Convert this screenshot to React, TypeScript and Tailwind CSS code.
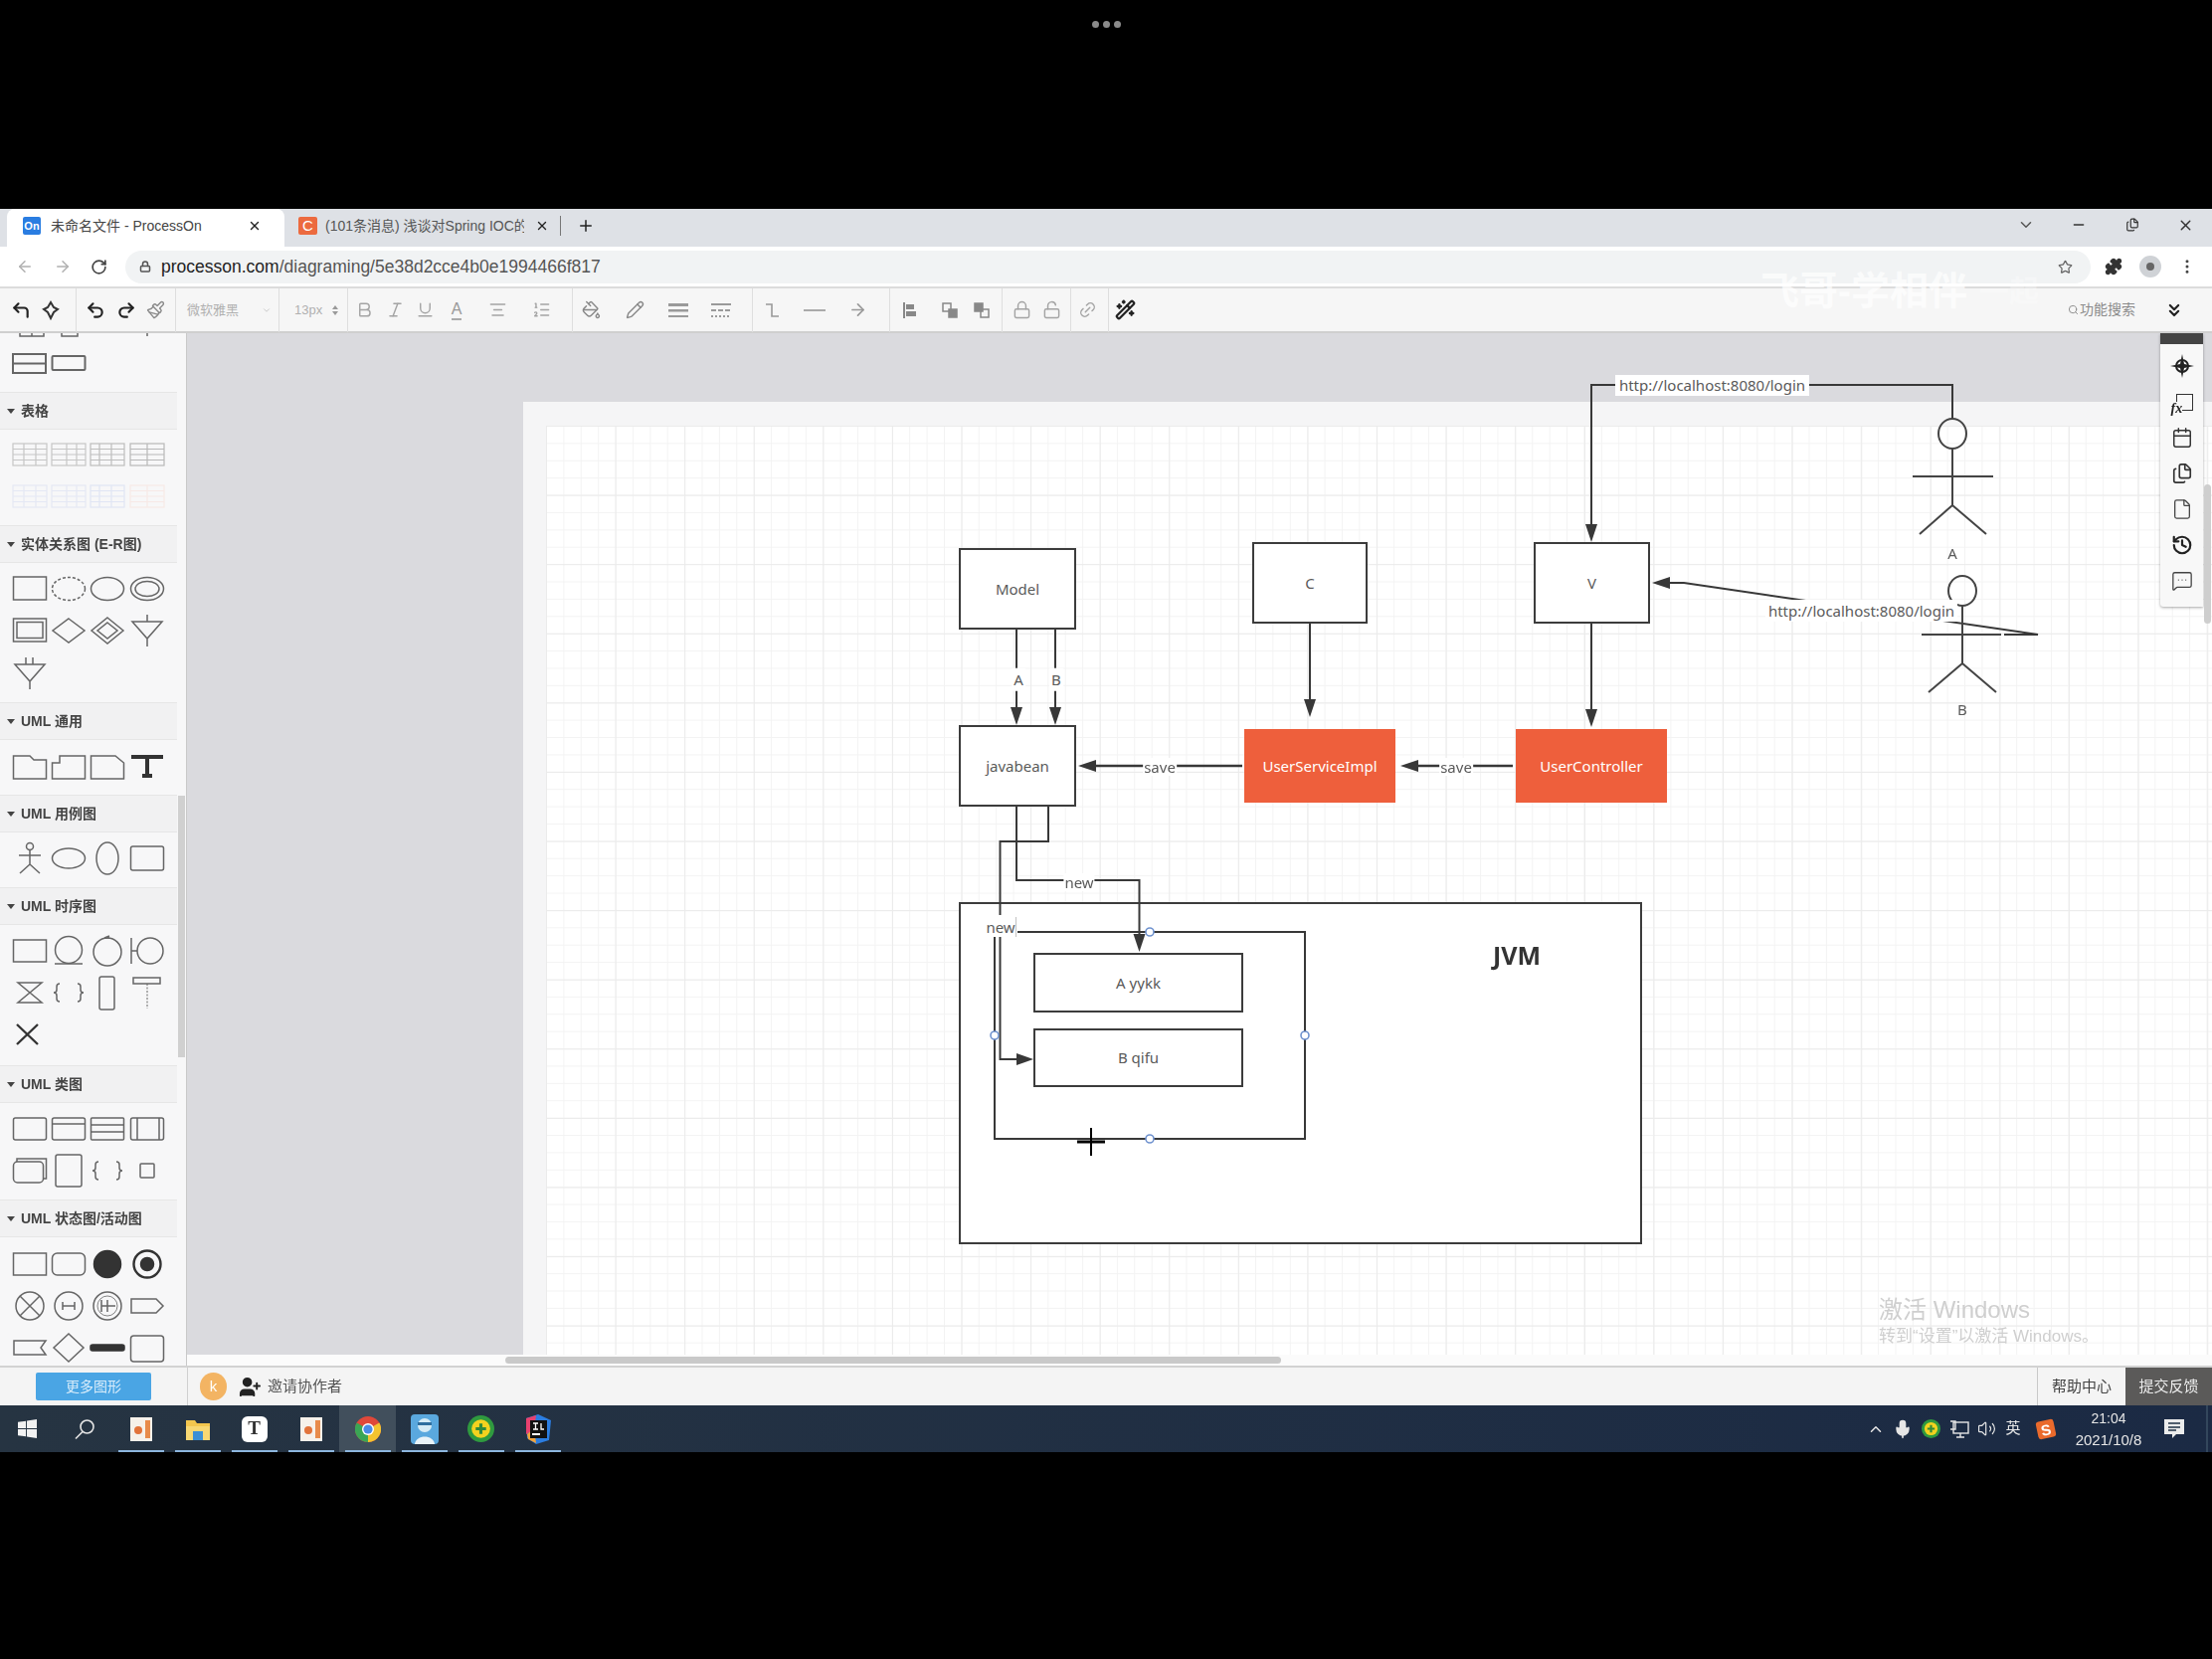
import React from 'react';
import {
  AlignCenter,
  ArrowLeft,
  ArrowRight,
  Bold,
  Calendar,
  ChevronDown,
  ChevronUp,
  ChevronsDown,
  CornerUpLeft,
  EllipsisVertical,
  File,
  Files,
  History,
  Italic,
  Link2,
  ListOrdered,
  Lock,
  LockOpen,
  MessageSquareMore,
  Mic,
  Minus,
  PaintBucket,
  Paintbrush,
  Pencil,
  Plus,
  Puzzle,
  Redo2,
  RotateCw,
  Search,
  Star,
  Underline,
  Undo2,
  UserPlus,
  Volume2,
  WandSparkles,
  X,
} from 'lucide-react';

const Sh: React.FC<{ children?: React.ReactNode }> = ({ children }) => (
  <svg width="36" height="36" viewBox="0 0 36 36" fill="none" stroke="#666" strokeWidth="1.5" className="mx-auto block">
    {children}
  </svg>
);

const TableIcon: React.FC<{ c: string; a?: number; b?: number }> = ({ c, a = 12, b = 24 }) => (
  <Sh>
    <g stroke={c} strokeWidth="1.2">
      <rect x="1" y="7" width="34" height="22" />
      <path d={`M1 12.5H35M1 18H35M1 23.5H35M${a} 7V29M${b} 7V29`} />
    </g>
  </Sh>
);

const Braces = () => (
  <Sh>
    <path d="M9 9q-3 0-3 3v3q0 3-3 3q3 0 3 3v3q0 3 3 3" />
    <path d="M27 9q3 0 3 3v3q0 3 3 3q-3 0-3 3v3q0 3-3 3" />
  </Sh>
);

type Row = React.ReactNode[];
type Section = { title: string; body: string; rows: Row[] };

const SECTIONS: Section[] = [
  {
    title: '表格',
    body: 'pt-[4px] pb-[8px]',
    rows: [
      [<TableIcon c="#c6c6c6" />, <TableIcon c="#c6c6c6" a={16} b={26} />, <TableIcon c="#bdbdbd" a={10} b={22} />, <TableIcon c="#b8b8b8" a={18} b={18} />],
      [<TableIcon c="#e4e8f4" />, <TableIcon c="#e4e8f4" a={16} b={26} />, <TableIcon c="#e0e5f4" a={10} b={22} />, <TableIcon c="#f7e9e6" a={18} b={18} />],
    ],
  },
  {
    title: '实体关系图 (E-R图)',
    body: 'pt-[5px] pb-[9px]',
    rows: [
      [
        <Sh><rect x="1.5" y="6" width="33" height="23" /></Sh>,
        <Sh><ellipse cx="18" cy="18" rx="16.5" ry="11.5" strokeDasharray="3 2" /></Sh>,
        <Sh><ellipse cx="18" cy="18" rx="16.5" ry="11.5" /></Sh>,
        <Sh><ellipse cx="18" cy="18" rx="16.5" ry="11.5" /><ellipse cx="18" cy="18" rx="12" ry="7.5" /></Sh>,
      ],
      [
        <Sh><rect x="1.5" y="6" width="33" height="23" /><rect x="5" y="9.5" width="26" height="16" /></Sh>,
        <Sh><path d="M18 6L34 18L18 30L2 18Z" /></Sh>,
        <Sh><path d="M18 5L34 18L18 31L2 18Z" /><path d="M18 10L28 18L18 26L8 18Z" /></Sh>,
        <Sh><path d="M3 9H33L18 26Z M18 2V9 M18 26V34" /></Sh>,
      ],
      [<Sh><path d="M3 10H33L18 27Z M14 3V10 M21 3V10 M18 27V35" /></Sh>, null, null, null],
    ],
  },
  {
    title: 'UML 通用',
    body: 'pt-[6px] pb-[7px]',
    rows: [
      [
        <Sh><path d="M1.5 11V30H34.5V11H22L18 7H1.5Z" /></Sh>,
        <Sh><path d="M9 7H34.5V30H1.5V14H9Z" /></Sh>,
        <Sh><path d="M1.5 7H26L34.5 14V30H1.5Z" /></Sh>,
        <Sh><path d="M2 8H34M18 8V27M13 27H23" stroke="#333" strokeWidth="4" /></Sh>,
      ],
    ],
  },
  {
    title: 'UML 用例图',
    body: 'pt-[5px] pb-[8px]',
    rows: [
      [
        <Sh><circle cx="18" cy="6" r="3.5" /><path d="M18 10V24M7 15H29M18 24L8 33M18 24L28 33" /></Sh>,
        <Sh><ellipse cx="18" cy="18" rx="16.5" ry="10" /></Sh>,
        <Sh><ellipse cx="18" cy="18" rx="11" ry="16" /></Sh>,
        <Sh><rect x="1.5" y="6" width="33" height="24" rx="2" /></Sh>,
      ],
    ],
  },
  {
    title: 'UML 时序图',
    body: 'pt-[5px] pb-[10px]',
    rows: [
      [
        <Sh><rect x="1.5" y="7" width="33" height="22" /></Sh>,
        <Sh><circle cx="18" cy="17" r="13.5" /><path d="M4 31H32" /></Sh>,
        <Sh><circle cx="18" cy="19" r="14" /><path d="M15 5L20 3M20 5L15 5" /></Sh>,
        <Sh><circle cx="21" cy="18" r="13" /><path d="M2 5V31M2 18H8" /></Sh>,
      ],
      [
        <Sh><path d="M6 8H30L6 28H30Z" /></Sh>,
        <Braces />,
        <Sh><rect x="10" y="2" width="15" height="33" rx="2" /></Sh>,
        <Sh><rect x="4" y="3" width="27" height="6" /><path d="M18 9V34" strokeDasharray="2 1.5" strokeWidth="1" /></Sh>,
      ],
      [<Sh><path d="M5 8L26 28M26 8L5 28" stroke="#333" strokeWidth="2.4" /></Sh>, null, null, null],
    ],
  },
  {
    title: 'UML 类图',
    body: 'pt-[5px] pb-[8px]',
    rows: [
      [
        <Sh><rect x="1.5" y="7" width="33" height="22" rx="2" /></Sh>,
        <Sh><rect x="1.5" y="7" width="33" height="22" rx="2" /><path d="M1.5 13H34.5" /></Sh>,
        <Sh><rect x="1.5" y="7" width="33" height="22" rx="1" /><path d="M1.5 14H34.5M1.5 21H34.5" /></Sh>,
        <Sh><rect x="1.5" y="7" width="33" height="22" rx="2" /><path d="M8 7V29M30 7V29" /></Sh>,
      ],
      [
        <Sh><rect x="1.5" y="9" width="30" height="21" rx="4" /><path d="M5 9V6H34.5V26H31.5" /></Sh>,
        <Sh><rect x="5" y="2" width="26" height="32" rx="2" /></Sh>,
        <Braces />,
        <Sh><rect x="11" y="11" width="14" height="14" rx="1" /></Sh>,
      ],
    ],
  },
  {
    title: 'UML 状态图/活动图',
    body: 'pt-[6px]',
    rows: [
      [
        <Sh><rect x="1.5" y="7" width="33" height="22" /></Sh>,
        <Sh><rect x="1.5" y="7" width="33" height="22" rx="5" /></Sh>,
        <Sh><circle cx="18" cy="18" r="13.5" fill="#333" stroke="#333" /></Sh>,
        <Sh><circle cx="18" cy="18" r="13.5" stroke="#333" strokeWidth="2.4" /><circle cx="18" cy="18" r="6.5" fill="#333" stroke="#333" /></Sh>,
      ],
      [
        <Sh><circle cx="18" cy="18" r="14" /><path d="M8 8L28 28M28 8L8 28" /></Sh>,
        <Sh><circle cx="18" cy="18" r="14" /><path d="M12 14V22M24 14V22M12 18H24" /></Sh>,
        <Sh><circle cx="18" cy="18" r="14" /><circle cx="18" cy="18" r="10" strokeWidth="0.8" /><path d="M12 12V24M18 12V24M12 18H26" /></Sh>,
        <Sh><path d="M2 11H27L34 18L27 25H2Z" /></Sh>,
      ],
      [
        <Sh><path d="M2 11H34L29 18L34 25H2Z" /></Sh>,
        <Sh><path d="M18 4L33 18L18 32L3 18Z" /></Sh>,
        <Sh><rect x="1" y="15" width="34" height="6" rx="2" fill="#333" stroke="#333" /></Sh>,
        <Sh><rect x="1.5" y="6" width="33" height="26" rx="3" /></Sh>,
      ],
    ],
  },
];

const ShapeGrid: React.FC<{ rows: Row[] }> = ({ rows }) => (
  <div className="pl-[10px]">
    {rows.map((row, i) => (
      <div key={i} className="grid h-[42px] grid-cols-[repeat(4,39.3px)] items-center">
        {row.map((cell, j) => (
          <div key={j}>{cell}</div>
        ))}
      </div>
    ))}
  </div>
);

const Sidebar = () => (
  <aside className="flex h-full w-[188px] shrink-0 overflow-hidden border-r border-[#c9c9c9] bg-[#f7f7f8]">
    <div className="w-[178px] shrink-0">
      <div className="-mt-[32px] pb-[7px]">
        <ShapeGrid
          rows={[
            [
              <Sh><rect x="8" y="10" width="24" height="22" /><path d="M20 10V32" /></Sh>,
              <Sh><rect x="11" y="10" width="16" height="22" /></Sh>,
              null,
              <Sh><path d="M18 20V32" /></Sh>,
            ],
            [
              <Sh><g strokeWidth="2"><rect x="1" y="8" width="33" height="19" /><path d="M1 17.5H34" /></g></Sh>,
              <Sh><rect x="1.5" y="10" width="33" height="14" rx="1" strokeWidth="2" /></Sh>,
              null,
              null,
            ],
          ]}
        />
      </div>
      {SECTIONS.map((s) => (
        <section key={s.title}>
          <header className="flex h-[38px] items-center gap-[6px] border-y border-[#e6e6e6] bg-[#f1f1f2] pl-[7px] text-[14px] font-bold text-[#444]">
            <span className="h-0 w-0 border-x-[4px] border-t-[5px] border-x-transparent border-t-[#444]" />
            {s.title}
          </header>
          <div className={s.body}>
            <ShapeGrid rows={s.rows} />
          </div>
        </section>
      ))}
    </div>
    <div className="flex-1 pl-[1px] pt-[465px]">
      <div className="h-[263px] w-[7px] bg-[#d0d0d0]" />
    </div>
  </aside>
);

const Sep: React.FC<{ className: string }> = ({ className }) => <div className={`h-[44px] w-px bg-[#dedede] ${className}`} />;

const Tool: React.FC<{ className?: string; children: React.ReactNode }> = ({ className = '', children }) => (
  <div className={`flex h-[24px] w-[24px] shrink-0 items-center justify-center ${className}`}>{children}</div>
);

const Toolbar = () => {
  const dark = { size: 20, color: '#222', strokeWidth: 2.6 };
  const off = { size: 19, color: '#a4a4a4', strokeWidth: 1.8 };
  return (
    <div className="flex h-[45px] shrink-0 items-center border-b-2 border-[#cfcfcf] bg-[#f6f6f6] pl-[9px] pr-[28px]">
      <Tool><CornerUpLeft {...dark} /></Tool>
      <Tool className="ml-[6px]">
        <svg width="20" height="20" viewBox="0 0 20 20" fill="none" stroke="#333" strokeWidth="2">
          <path d="M10 2L13 7L17 9L13 12L10 18L7 12L3 9L7 7Z" />
        </svg>
      </Tool>
      <Sep className="ml-[13px]" />
      <Tool className="ml-[7px]"><Undo2 {...dark} /></Tool>
      <Tool className="ml-[7px]"><Redo2 {...dark} /></Tool>
      <Tool className="ml-[5px]"><Paintbrush {...off} color="#8a8a8a" /></Tool>
      <Sep className="ml-[8px]" />
      <span className="ml-[11px] w-[55px] shrink-0 text-[13px] text-[#b0b0b0]">微软雅黑</span>
      <ChevronDown className="ml-[20px] shrink-0" size={10} color="#c0c0c0" />
      <Sep className="ml-[7px]" />
      <span className="ml-[15px] w-[29px] shrink-0 text-[13px] text-[#b0b0b0]">13px</span>
      <div className="ml-[7px] flex w-[10px] shrink-0 flex-col items-center gap-[2px]">
        <span className="h-0 w-0 border-x-[3px] border-b-[4px] border-x-transparent border-b-[#999]" />
        <span className="h-0 w-0 border-x-[3px] border-t-[4px] border-x-transparent border-t-[#999]" />
      </div>
      <Sep className="ml-[7px]" />
      <Tool className="ml-[4px]"><Bold {...off} /></Tool>
      <Tool className="ml-[7px]"><Italic {...off} /></Tool>
      <Tool className="ml-[6px]"><Underline {...off} /></Tool>
      <Tool className="ml-[8px]"><span className="border-b-2 border-[#aaa] text-[16px] leading-[18px] text-[#999]">A</span></Tool>
      <Tool className="ml-[17px]"><AlignCenter {...off} /></Tool>
      <Tool className="ml-[20px]"><ListOrdered {...off} /></Tool>
      <Sep className="ml-[19px]" />
      <Tool className="ml-[6px]"><PaintBucket {...off} color="#888" /></Tool>
      <Tool className="ml-[20px]"><Pencil {...off} color="#888" /></Tool>
      <Tool className="ml-[20px]">
        <svg width="20" height="16" viewBox="0 0 20 16" fill="#9a9a9a"><rect y="1" width="20" height="3" /><rect y="7" width="20" height="2.5" /><rect y="13" width="20" height="2" /></svg>
      </Tool>
      <Tool className="ml-[19px]">
        <svg width="20" height="16" viewBox="0 0 20 16" fill="none" stroke="#9a9a9a" strokeWidth="2"><path d="M0 2H20" /><path d="M0 8H20" strokeDasharray="5 2" /><path d="M0 14H20" strokeDasharray="2 2" /></svg>
      </Tool>
      <Sep className="ml-[19px]" />
      <Tool className="ml-[7px]">
        <svg width="18" height="18" viewBox="0 0 18 18" fill="none" stroke="#999" strokeWidth="1.6"><path d="M3 3H9V15H16" /></svg>
      </Tool>
      <Tool className="ml-[19px]"><div className="h-[2px] w-[22px] bg-[#aaa]" /></Tool>
      <Tool className="ml-[19px]"><ArrowRight {...off} color="#999" strokeWidth={2.2} /></Tool>
      <Sep className="ml-[20px]" />
      <Tool className="ml-[7px]">
        <svg width="18" height="18" viewBox="0 0 18 18" fill="#888"><rect x="3" y="1" width="2" height="16" /><rect x="6" y="3" width="8" height="5" /><rect x="6" y="10" width="10" height="5" /></svg>
      </Tool>
      <Tool className="ml-[17px]">
        <svg width="18" height="18" viewBox="0 0 18 18" fill="none" stroke="#888" strokeWidth="1.5"><rect x="2" y="2" width="8" height="8" /><rect x="8" y="8" width="8" height="8" fill="#888" /></svg>
      </Tool>
      <Tool className="ml-[8px]">
        <svg width="18" height="18" viewBox="0 0 18 18" fill="none" stroke="#888" strokeWidth="1.5"><rect x="2" y="2" width="8" height="8" fill="#888" /><rect x="8" y="8" width="8" height="8" /></svg>
      </Tool>
      <Sep className="ml-[8px]" />
      <Tool className="ml-[7px]"><Lock {...off} /></Tool>
      <Tool className="ml-[6px]"><LockOpen {...off} /></Tool>
      <Sep className="ml-[7px]" />
      <Tool className="ml-[4px]"><Link2 {...off} className="-rotate-45" /></Tool>
      <Sep className="ml-[9px]" />
      <Tool className="ml-[4px]"><WandSparkles {...dark} size={21} /></Tool>
      <div className="ml-auto flex items-center gap-[1px] text-[14px] text-[#8a8a8a]">
        <Search size={11} color="#888" />
        功能搜索
      </div>
      <ChevronsDown className="ml-[29px]" size={20} color="#222" strokeWidth={2.6} />
    </div>
  );
};

const Canvas = () => (
  <div className="flex min-w-0 flex-1 flex-col">
    <div className="relative flex-1 overflow-hidden bg-[#dadade]">
      {/* page with its grid */}
      <div className="absolute bottom-0 left-[338px] right-0 top-[69px] bg-[#f5f5f6] pl-[23px] pt-[24px]">
        <div className="h-full bg-white bg-[linear-gradient(to_right,#ebebeb_1px,transparent_1px),linear-gradient(to_bottom,#ebebeb_1px,transparent_1px),linear-gradient(to_right,#f3f3f3_1px,transparent_1px),linear-gradient(to_bottom,#f3f3f3_1px,transparent_1px)] bg-[size:69.6px_69.6px,69.6px_69.6px,17.4px_17.4px,17.4px_17.4px]" />
      </div>

      {/* JVM frame sits under the connectors */}
      <div className="absolute left-[776px] top-[572px] h-[344px] w-[687px] border-2 border-[#3c3c3c] bg-white" />
      <span className="absolute left-[1337px] top-[626px] -translate-x-1/2 -translate-y-1/2 text-[25px] font-bold text-[#333] [font-family:'Noto_Sans',sans-serif]">JVM</span>

      {/* connectors */}
      <svg className="absolute inset-0 h-full w-full" viewBox="188 335 2036 1027" fill="none" stroke="#383838" strokeWidth="2">
        <path d="M1963 422V387H1600V530" />
        <path d="M1600 627V716M1317 627V706M1022 633V716M1061 633V716" />
        <path d="M1249 770H1098M1521 770H1422" strokeWidth="2.4" />
        <path d="M1022 811V885H1145.5V942" />
        <path d="M1054 811V846H1005.5V920M1005.5 942V1065H1026" />
        <path d="M1023 937H1312V1145H1000V942" />
        <path d="M2015 638H2049L1693 586H1675" />
        <g fill="#383838" stroke="none">
          <path d="M1600 545L1594 527H1606Z" />
          <path d="M1600 731L1594 713H1606Z" />
          <path d="M1317 721L1311 703H1323Z" />
          <path d="M1022 729L1016 711H1028Z" />
          <path d="M1061 729L1055 711H1067Z" />
          <path d="M1145.5 957L1139.5 939H1151.5Z" />
          <path d="M1084 770L1102 764V776Z" />
          <path d="M1408 770L1426 764V776Z" />
          <path d="M1039 1065L1022 1059V1071Z" />
          <path d="M1661 586L1679 580V592Z" />
        </g>
        <g stroke="#444">
          <ellipse cx="1963" cy="436" rx="14" ry="15" />
          <path d="M1963 451V508M1923 479H2004M1963 508L1930 537M1963 508L1997 537" />
          <ellipse cx="1973" cy="594" rx="14" ry="15" />
          <path d="M1973 609V667M1932 638H2012M1973 667L1939 696M1973 667L2007 696" />
        </g>
        <g fill="#fff" stroke="#6f92cf" strokeWidth="1.6">
          <circle cx="1156" cy="937" r="4" />
          <circle cx="1000" cy="1041" r="4" />
          <circle cx="1312" cy="1041" r="4" />
          <circle cx="1156" cy="1145" r="4" />
        </g>
        <path d="M1097 1134V1162" stroke="#000" strokeWidth="2" />
        <path d="M1083 1148H1111" stroke="#000" strokeWidth="3" />
      </svg>

      {/* nodes */}
      <div className="text-[15px] text-[#5a5a5a] [font-family:'Noto_Sans',sans-serif]">
        <div className="absolute left-[776px] top-[216px] flex h-[82px] w-[118px] items-center justify-center border-2 border-[#3c3c3c] bg-white">Model</div>
        <div className="absolute left-[1071px] top-[210px] flex h-[82px] w-[116px] items-center justify-center border-2 border-[#3c3c3c] bg-white">C</div>
        <div className="absolute left-[1354px] top-[210px] flex h-[82px] w-[117px] items-center justify-center border-2 border-[#3c3c3c] bg-white">V</div>
        <div className="absolute left-[776px] top-[394px] flex h-[82px] w-[118px] items-center justify-center border-2 border-[#3c3c3c] bg-white">javabean</div>
        <div className="absolute left-[1063px] top-[398px] flex h-[74px] w-[152px] items-center justify-center bg-[#ee5f3c] text-white">UserServiceImpl</div>
        <div className="absolute left-[1336px] top-[398px] flex h-[74px] w-[152px] items-center justify-center bg-[#ee5f3c] text-white">UserController</div>
        <div className="absolute left-[851px] top-[623px] flex h-[60px] w-[211px] items-center justify-center border-2 border-[#3c3c3c] bg-white">A yykk</div>
        <div className="absolute left-[851px] top-[699px] flex h-[59px] w-[211px] items-center justify-center border-2 border-[#3c3c3c] bg-white">B qifu</div>

        <span className="absolute left-[836px] top-[348px] -translate-x-1/2 -translate-y-1/2 bg-white px-[2px]">A</span>
        <span className="absolute left-[874px] top-[348px] -translate-x-1/2 -translate-y-1/2 bg-white px-[2px]">B</span>
        <span className="absolute left-[978px] top-[436px] -translate-x-1/2 -translate-y-1/2 bg-white px-[1px] leading-[18px]">save</span>
        <span className="absolute left-[1276px] top-[436px] -translate-x-1/2 -translate-y-1/2 bg-white px-[1px] leading-[18px]">save</span>
        <span className="absolute left-[897px] top-[552px] -translate-x-1/2 -translate-y-1/2 bg-white px-[1px] leading-[18px]">new</span>
        <span className="absolute left-[818px] top-[597px] -translate-x-1/2 -translate-y-1/2 bg-white px-[1px] leading-[20px]">new</span>
        <span className="absolute left-[1436px] top-[42px] flex h-[21px] w-[195px] items-center justify-center whitespace-nowrap bg-white">http://localhost:8080/login</span>
        <span className="absolute left-[1587px] top-[268px] flex h-[22px] w-[193px] items-center justify-center whitespace-nowrap bg-white">http://localhost:8080/login</span>
        <span className="absolute left-[1775px] top-[221px] -translate-x-1/2 -translate-y-1/2">A</span>
        <span className="absolute left-[1785px] top-[378px] -translate-x-1/2 -translate-y-1/2">B</span>
      </div>

      {/* Windows activation notice */}
      <div className="absolute left-[1701px] top-[968px] text-[#cfcfcf]">
        <p className="text-[24px] leading-[28px]">激活 Windows</p>
        <p className="text-[17px] leading-[26px]">转到“设置”以激活 Windows。</p>
      </div>

      {/* right floating panel */}
      <div className="absolute left-[1984px] top-0 h-[275px] w-[43px] rounded-bl-[3px] bg-[#f8f8f8] shadow-[0_1px_3px_rgba(0,0,0,0.35)]">
        <div className="h-[11px] bg-[#444]" />
        <div className="flex flex-col items-center pt-[4px]">
          <div className="flex h-[36px] items-center">
            <svg width="24" height="24" viewBox="0 0 24 24" fill="#222"><path d="M12 0L14 10L24 12L14 14L12 24L10 14L0 12L10 10Z" /><circle cx="12" cy="12" r="6" fill="none" stroke="#222" strokeWidth="2" /></svg>
          </div>
          <div className="relative flex h-[36px] items-center">
            <div className="ml-[5px] h-[17px] w-[17px] border-[1.5px] border-[#333]" />
            <span className="absolute bottom-[4px] left-0 bg-[#f8f8f8] text-[14px] font-bold italic leading-[14px] text-[#222] [font-family:'Liberation_Serif',serif]">fx</span>
          </div>
          <div className="flex h-[36px] items-center"><Calendar size={22} color="#333" strokeWidth={1.6} /></div>
          <div className="flex h-[36px] items-center"><Files size={22} color="#333" strokeWidth={1.8} /></div>
          <div className="flex h-[36px] items-center"><File size={22} color="#444" strokeWidth={1.4} /></div>
          <div className="flex h-[36px] items-center"><History size={22} color="#222" strokeWidth={2.4} /></div>
          <div className="flex h-[36px] items-center"><MessageSquareMore size={22} color="#444" strokeWidth={1.4} /></div>
        </div>
      </div>
      <div className="absolute left-[2028px] top-[152px] h-[140px] w-[7px] rounded-full bg-[#cecece]" />
    </div>
    {/* horizontal scroll strip */}
    <div className="flex h-[11px] shrink-0 items-center bg-[#fbfbfb] pl-[320px]">
      <div className="h-[7px] w-[780px] rounded-full bg-[#c9c9c9]" />
    </div>
  </div>
);

const PptIcon = () => (
  <svg width="24" height="28" viewBox="0 0 24 28">
    <rect x="1" y="2" width="22" height="24" fill="#f6f1ea" />
    <rect x="16" y="5" width="5" height="18" fill="#e88b4a" />
    <circle cx="9" cy="15" r="4" fill="#e2733a" />
  </svg>
);

const TaskSlot: React.FC<{ active?: boolean; running?: boolean; children: React.ReactNode }> = ({ active, running, children }) => (
  <div className={`relative flex h-full w-[57px] shrink-0 items-center justify-center ${active ? 'bg-[#414f5c]' : ''}`}>
    {children}
    {running && <div className="absolute bottom-0 left-1/2 h-[2px] w-[46px] -translate-x-1/2 bg-[#8db6de]" />}
  </div>
);

const Green360: React.FC<{ size: number }> = ({ size }) => (
  <svg width={size} height={size} viewBox="0 0 26 26">
    <circle cx="13" cy="13" r="13" fill="#2f9a3f" />
    <circle cx="13" cy="13" r="9" fill="#f3d21f" />
    <path d="M13 8V18M8 13H18" stroke="#2f8a3a" strokeWidth="3" />
  </svg>
);

const Taskbar = () => (
  <div className="flex h-[47px] shrink-0 items-center bg-gradient-to-r from-[#263442] to-[#1b2a44] text-[#e6e6e6]">
    <div className="flex h-full -ml-px">
      <TaskSlot>
        <svg width="19" height="19" viewBox="0 0 20 20" fill="#f2f2f2"><path d="M0 3L8.5 1.8V9.5H0ZM9.5 1.6L20 0V9.5H9.5ZM0 10.5H8.5V18.2L0 17ZM9.5 10.5H20V20L9.5 18.4Z" /></svg>
      </TaskSlot>
      <TaskSlot>
        <svg width="22" height="22" viewBox="0 0 22 22" fill="none" stroke="#e6e6e6" strokeWidth="1.6"><circle cx="13.5" cy="8.5" r="6.5" /><path d="M9 13.5L2 20.5" /></svg>
      </TaskSlot>
      <TaskSlot running><PptIcon /></TaskSlot>
      <TaskSlot running>
        <svg width="26" height="26" viewBox="0 0 26 26"><path d="M1 4H10L12 7H25V24H1Z" fill="#f3c64e" /><rect x="1" y="10" width="24" height="14" fill="#f8d873" /><rect x="8" y="15" width="10" height="9" fill="#3c8fd6" /></svg>
      </TaskSlot>
      <TaskSlot running>
        <div className="flex h-[26px] w-[26px] items-center justify-center rounded-[6px] bg-white text-[19px] font-bold text-[#333] [font-family:'Liberation_Serif',serif]">T</div>
      </TaskSlot>
      <TaskSlot running><PptIcon /></TaskSlot>
      <TaskSlot active running>
        <svg width="26" height="26" viewBox="0 0 26 26">
          <circle cx="13" cy="13" r="13" fill="#e0483a" />
          <path d="M13 13L1.7 6.5A13 13 0 0 0 13 26Z" fill="#3aa655" />
          <path d="M13 13L13 26A13 13 0 0 0 24.3 6.5Z" fill="#f4c430" />
          <circle cx="13" cy="13" r="6" fill="#fff" />
          <circle cx="13" cy="13" r="4.6" fill="#4a8be8" />
        </svg>
      </TaskSlot>
      <TaskSlot running>
        <svg width="28" height="30" viewBox="0 0 28 30"><rect width="28" height="30" rx="4" fill="#5aa8de" /><circle cx="14" cy="11" r="7" fill="#d6ecf6" /><path d="M4 30C5 20 23 20 24 30Z" fill="#e9f3f8" /><rect x="7" y="8" width="14" height="3" fill="#2f6f9f" /></svg>
      </TaskSlot>
      <TaskSlot running><Green360 size={27} /></TaskSlot>
      <TaskSlot running>
        <svg width="28" height="30" viewBox="0 0 28 30">
          <path d="M2 4L14 0L27 6L25 26L12 30L3 24Z" fill="#2b7de0" />
          <path d="M2 4L12 1L10 16L2 20Z" fill="#e8416f" />
          <path d="M3 20L10 14L12 29L4 25Z" fill="#f2a33a" />
          <rect x="6" y="6" width="17" height="18" fill="#111" />
          <rect x="8" y="19" width="8" height="2" fill="#fff" />
          <path d="M9 9H14M11.5 9V15M9 15H14M17 9V15H20" stroke="#fff" strokeWidth="1.3" fill="none" />
        </svg>
      </TaskSlot>
    </div>
    <div className="ml-auto flex h-full items-center">
      <div className="flex w-[26px] justify-center"><ChevronUp size={18} color="#e6e6e6" /></div>
      <div className="flex w-[28px] justify-center"><Mic size={20} color="#e6e6e6" fill="#e6e6e6" /></div>
      <div className="flex w-[28px] justify-center"><Green360 size={19} /></div>
      <div className="flex w-[29px] justify-center">
        <svg width="20" height="18" viewBox="0 0 20 18" fill="none" stroke="#e6e6e6" strokeWidth="1.4"><rect x="4" y="2" width="15" height="11" /><path d="M1 1H6V9H1M11 13V17M7 17H15" /></svg>
      </div>
      <div className="flex w-[26px] justify-center"><Volume2 size={19} color="#e6e6e6" strokeWidth={1.5} /></div>
      <div className="flex w-[28px] justify-center text-[15px]">英</div>
      <div className="flex w-[38px] justify-center">
        <div className="flex h-[18px] w-[18px] -rotate-12 items-center justify-center rounded-[3px] bg-[#ea6a2c] text-[15px] font-bold leading-none text-white">S</div>
      </div>
      <div className="flex w-[88px] flex-col items-center leading-[22px]">
        <span className="text-[14px]">21:04</span>
        <span className="text-[15px]">2021/10/8</span>
      </div>
      <div className="flex w-[44px] justify-center">
        <svg width="20" height="19" viewBox="0 0 20 19" fill="#ececec"><path d="M0 0H20V15H12L8 19V15H0Z" /><path d="M4 4H16M4 8H16M4 11H12" stroke="#1f3044" strokeWidth="1.3" /></svg>
      </div>
      <div className="h-full w-[16px] pl-[10px]"><div className="h-full w-[2px] bg-[#33475c]" /></div>
    </div>
  </div>
);

const Window = () => (
  <div className="relative flex h-[1250px] shrink-0 flex-col overflow-hidden blur-[0.5px]">
    {/* tab strip */}
    <div className="flex h-[38px] shrink-0 items-start bg-[#dee1e6] pl-[7px] text-[14px] text-[#555]">
      <div className="flex h-[38px] w-[279px] shrink-0 items-center rounded-t-[8px] bg-white pb-[4px] pl-[16px]">
        <div className="flex h-[18px] w-[18px] items-center justify-center rounded-[2px] bg-[#2a7de1] text-[11px] font-bold text-white">On</div>
        <span className="ml-[10px] w-[198px] text-[#444]">未命名文件 - ProcessOn</span>
        <X size={14} color="#222" strokeWidth={2.4} />
      </div>
      <div className="flex h-[38px] items-center pb-[4px] pl-[14px]">
        <div className="flex h-[18px] w-[19px] items-center justify-center rounded-[2px] bg-[#ec6a3f] text-[15px] text-white">C</div>
        <span className="ml-[8px] w-[200px] overflow-hidden whitespace-nowrap">(101条消息) 浅谈对Spring IOC的</span>
        <X className="ml-[11px]" size={14} color="#222" strokeWidth={2.4} />
        <div className="ml-[11px] h-[20px] w-px bg-[#777]" />
        <Plus className="ml-[16px]" size={18} color="#222" strokeWidth={2} />
      </div>
      <div className="ml-auto flex h-[30px] items-center pr-[18px] pt-[2px]">
        <ChevronDown size={18} color="#555" />
        <Minus className="ml-[36px]" size={16} color="#333" strokeWidth={2} />
        <Files className="ml-[39px]" size={14} color="#333" strokeWidth={2} />
        <X className="ml-[38px]" size={17} color="#333" />
      </div>
    </div>
    {/* address bar */}
    <div className="flex h-[42px] shrink-0 items-center border-b-2 border-[#dcdcdc] bg-white pl-[16px] pr-[16px]">
      <ArrowLeft size={18} color="#b0b0b0" />
      <ArrowRight className="ml-[20px]" size={18} color="#b0b0b0" />
      <RotateCw className="ml-[19px]" size={17} color="#444" strokeWidth={2.4} />
      <div className="ml-[18px] flex h-[33px] flex-1 items-center rounded-full bg-[#f1f3f4] pl-[14px] text-[17.5px] text-[#555]">
        <Lock size={12} color="#555" strokeWidth={3} />
        <span className="ml-[10px]">
          <span className="text-[#222]">processon.com</span>/diagraming/5e38d2cce4b0e1994466f817
        </span>
      </div>
      <Star className="-ml-[33px]" size={15} color="#666" />
      <Puzzle className="ml-[32px]" size={18} color="#333" fill="#333" />
      <div className="ml-[17px] flex h-[22px] w-[22px] items-center justify-center rounded-full bg-[#cfd2d6]">
        <div className="h-[8px] w-[8px] rounded-full bg-[#666]" />
      </div>
      <EllipsisVertical className="ml-[17px]" size={18} color="#444" />
    </div>
    <Toolbar />
    <div className="flex min-h-0 flex-1">
      <Sidebar />
      <Canvas />
    </div>
    {/* status bar */}
    <div className="flex h-[40px] shrink-0 border-t-2 border-[#d2d2d2] bg-[#f4f4f4]">
      <div className="flex w-[189px] shrink-0 items-center border-r border-[#d0d0d0] pl-[36px]">
        <div className="flex h-[28px] w-[116px] items-center justify-center rounded-[2px] bg-[#4aa5e4] text-[14px] text-[#d8ecfa]">更多图形</div>
      </div>
      <div className="ml-[12px] flex h-[28px] w-[27px] items-center justify-center self-center rounded-full bg-[#f3b463] text-[15px] text-white">k</div>
      <UserPlus className="ml-[12px] self-center" size={23} color="#222" fill="#222" />
      <span className="ml-[6px] self-center text-[15px] text-[#555]">邀请协作者</span>
      <div className="ml-auto flex w-[89px] items-center justify-center border-l border-[#c8c8c8] text-[15px] text-[#444]">帮助中心</div>
      <div className="flex w-[87px] items-center justify-center bg-[#5b5a59] text-[15px] text-[#ececec]">提交反馈</div>
    </div>
    <Taskbar />
    {/* recording watermark */}
    <div className="pointer-events-none absolute left-[1770px] top-[67px] flex items-center gap-[12px] text-white">
      <span className="text-[39px] font-bold leading-[32px] opacity-70">飞哥-学相伴</span>
      <span className="text-[30px] font-bold leading-[32px] opacity-30">一起</span>
    </div>
  </div>
);

const App: React.FC = () => {
  return (
    <div className="flex h-[1668px] w-[2224px] flex-col overflow-hidden bg-black [font-family:'Liberation_Sans','Noto_Sans_CJK_SC',sans-serif]">
      <div className="flex h-[210px] shrink-0 justify-center gap-[4px] pt-[21px]">
        <span className="h-[7px] w-[7px] rounded-full bg-[#8a8a8a]" />
        <span className="h-[7px] w-[7px] rounded-full bg-[#8a8a8a]" />
        <span className="h-[7px] w-[7px] rounded-full bg-[#8a8a8a]" />
      </div>
      <Window />
    </div>
  );
};

export default App;
